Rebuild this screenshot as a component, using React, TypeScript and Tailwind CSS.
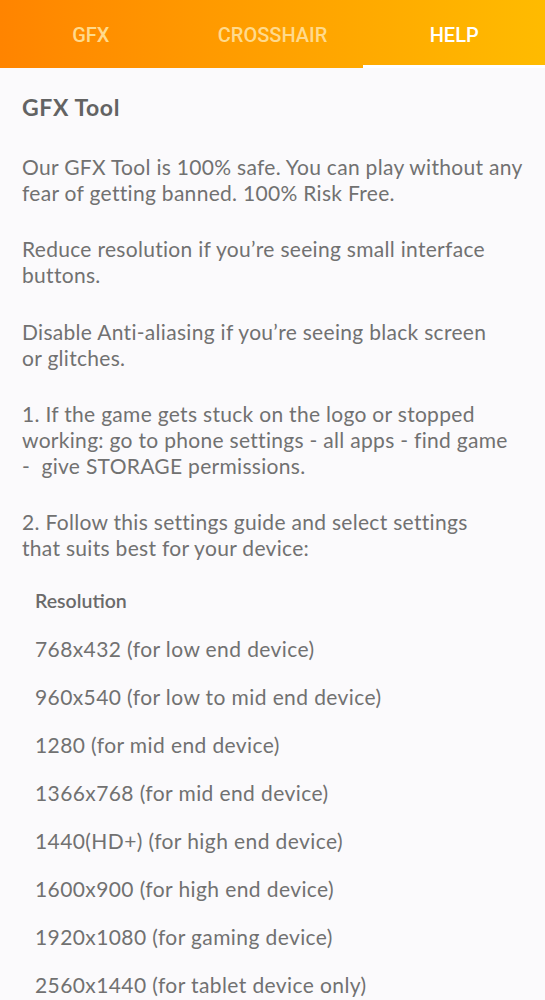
import React from "react";

const tabs = ["GFX", "CROSSHAIR", "HELP"];

// each paragraph is kept with the same line breaks as the app shows
const paragraphs = [
  ["Our GFX Tool is 100% safe. You can play without any", "fear of getting banned. 100% Risk Free."],
  ["Reduce resolution if you\u2019re seeing small interface", "buttons."],
  ["Disable Anti-aliasing if you\u2019re seeing black screen", "or glitches."],
  [
    "1. If the game gets stuck on the logo or stopped",
    "working: go to phone settings - all apps - find game",
    "-  give STORAGE permissions.",
  ],
  ["2. Follow this settings guide and select settings", "that suits best for your device:"],
];

const resolutions = [
  "768x432 (for low end device)",
  "960x540 (for low to mid end device)",
  "1280 (for mid end device)",
  "1366x768 (for mid end device)",
  "1440(HD+) (for high end device)",
  "1600x900 (for high end device)",
  "1920x1080 (for gaming device)",
  "2560x1440 (for tablet device only)",
];

export default function App() {
  const active = 2;

  return (
    <div className="h-[1000px] overflow-hidden bg-[#fbfafc]">
      {/* Tabs */}
      <div className="flex h-[68px] bg-gradient-to-r from-[#ff8400] to-[#ffbb00] font-['Roboto',sans-serif]">
        {tabs.map((t, i) => (
          <div
            key={t}
            className={`relative flex flex-1 items-center justify-center pt-[2px] text-[20px] font-medium ${
              i === active ? "text-white" : "text-[#ffda8c]"
            }`}
          >
            {t}
            {i === active && (
              <div className="absolute bottom-0 left-0 right-0 h-[3px] bg-white" />
            )}
          </div>
        ))}
      </div>

      {/* Content */}
      <div className="px-[22px] pt-[24px] font-['Lato',sans-serif] text-[#717171]">
        <h1 className="mb-[32px] text-[23px] font-bold leading-[30px] tracking-[0.6px] text-[#636363]">
          GFX Tool
        </h1>

        <div className="flex flex-col gap-[31px]">
          {paragraphs.map((lines) => (
            <p key={lines[0]} className="whitespace-pre text-[21px] leading-[25.7px] tracking-[0.3px]">
              {lines.map((l, i) => (
                <React.Fragment key={l}>
                  {i > 0 && <br />}
                  {l}
                </React.Fragment>
              ))}
            </p>
          ))}
        </div>

        <div className="mt-[28px] flex flex-col gap-[24px] px-[13px] text-[21px] leading-[24px] tracking-[0.4px]">
          <div className="text-[19.5px] font-semibold tracking-normal text-[#6a6a6a]">Resolution</div>
          {resolutions.map((r) => (
            <div key={r}>{r}</div>
          ))}
        </div>
      </div>
    </div>
  );
}
